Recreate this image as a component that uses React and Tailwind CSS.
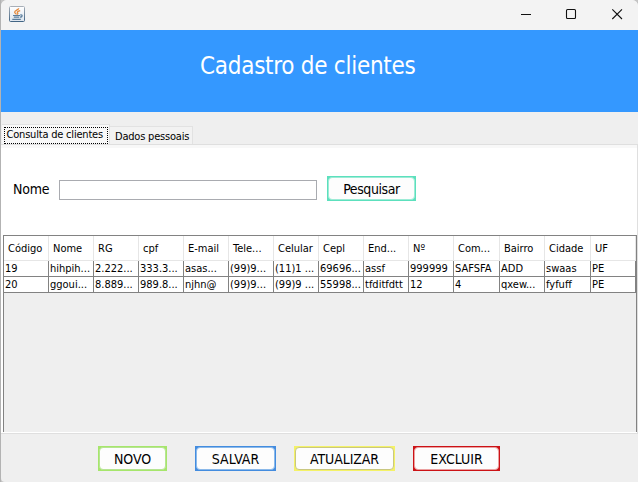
import React from "react";

const columns = [
  ["Código", "19", "20"],
  ["Nome", "hihpih...", "ggoui..."],
  ["RG", "2.222...", "8.889..."],
  ["cpf", "333.3...", "989.8..."],
  ["E-mail", "asas...", "njhn@"],
  ["Tele...", "(99)9...", "(99)9..."],
  ["Celular", "(11)1 ...", "(99)9 ..."],
  ["Cepl", "69696...", "55998..."],
  ["End...", "assf", "tfditfdtt"],
  ["Nº", "999999", "12"],
  ["Com...", "SAFSFA", "4"],
  ["Bairro", "ADD", "qxew..."],
  ["Cidade", "swaas", "fyfuff"],
  ["UF", "PE", "PE"],
];

const grid =
  "grid grid-cols-[45px_45px_45px_45px_45px_45px_45px_45px_45px_45px_46px_45px_46px_45px]";

function ActionButton({ children, frame, edge }) {
  return (
    <button className={`h-[25px] shrink-0 p-px ${frame}`}>
      <span
        className={`flex h-full w-full items-center justify-center rounded-[4px] border bg-[#fdfdfd] text-[14px] leading-[16px] whitespace-nowrap ${edge}`}
      >
        {children}
      </span>
    </button>
  );
}

function JavaIcon() {
  return (
    <svg width="16" height="16" viewBox="0 0 16 16" fill="none">
      <defs>
        <linearGradient id="tile" x1="0" y1="0" x2="0" y2="1">
          <stop offset="0" stopColor="#fff" />
          <stop offset="1" stopColor="#dde5ee" />
        </linearGradient>
        <linearGradient id="rim" x1="0" y1="0" x2="0" y2="1">
          <stop offset="0" stopColor="#a7afb8" />
          <stop offset="1" stopColor="#426584" />
        </linearGradient>
      </defs>
      <rect x=".5" y=".5" width="15" height="15" rx="1" fill="url(#tile)" stroke="url(#rim)" />
      <path d="M9.7 2.2C9.8 4 5.2 4.5 5.7 6.4C6 7.2 7 7.5 7.3 8.4M11.2 4.7C8.5 5.4 7.8 6.1 8.6 6.8C9.2 7.4 9 7.9 8.3 8.6" stroke="#e58a3c" strokeWidth="1.3" />
      <path d="M4 9.5H11M4.8 11.2H10.3M11.2 9C14 8.4 13.6 11.2 11 11.2M3.3 13.3H11.8" stroke="#5b7d9c" strokeWidth="1.2" />
    </svg>
  );
}

export default function App() {
  return (
    <div className="flex h-[482px] w-[639px] overflow-hidden bg-[#c4c4c4] font-['DejaVu_Sans_Condensed','DejaVu_Sans',sans-serif] text-black">
      <div className="w-px shrink-0 bg-[#b3b3b3]" />
      <div className="flex w-[637px] flex-col overflow-hidden rounded-t-[6px] rounded-bl-[4px] bg-[#efefef]">
        <header className="flex h-[30px] shrink-0 items-start justify-between bg-[#f3f3f3] pt-[6px] pr-[15px] pl-[8px]">
          <JavaIcon />
          <svg width="102" height="16" viewBox="0 0 102 16" fill="none" stroke="#111">
            <path d="M0 8.5H10" />
            <rect x="45.5" y="3.5" width="9" height="9" rx="1" strokeWidth="1.1" />
            <path d="M91.3 3.3L101 13M101 3.3L91.3 13" strokeWidth="1.1" />
          </svg>
        </header>
        <div className="flex h-[82px] shrink-0 bg-[#3498ff] pt-[20px] pl-[199px]">
          <h1 className="text-[24px] leading-[32px] tracking-[-0.28px] whitespace-nowrap text-white">Cadastro de clientes</h1>
        </div>
        <div className="flex h-[32px] shrink-0 items-end pl-px">
          <div className="flex h-[20px] w-[108px] justify-center border-t border-r border-[#e2e2e2] bg-[#f8f8f8] pt-[2px]">
            <span className="flex h-[17px] w-[104px] border border-dotted border-black pl-[2px] text-[11px] leading-[13px] tracking-[-0.2px] whitespace-nowrap">Consulta de clientes</span>
          </div>
          <div className="h-[18px] w-[83px] border-t border-r border-[#e2e2e2] bg-[#f2f2f2] pl-[5px] text-[11px] leading-[19px] tracking-[-0.2px] whitespace-nowrap">Dados pessoais</div>
        </div>
        <main className="flex h-[289px] shrink-0 flex-col border-t border-r border-[#dfdfdf] bg-white">
          <div className="h-[3px] shrink-0 bg-[#f8f8f8]" />
          <div className="flex h-[87px] shrink-0 items-start pt-[28px] pl-[12px]">
            <label className="w-[46px] pt-[4px] text-[14px] leading-[18px] tracking-[-0.2px]">Nome</label>
            <input className="mt-[4px] mr-[10px] h-[20px] w-[258px] border border-[#a9abb0] bg-white outline-none" />
            <ActionButton frame="w-[89px] bg-[#5ce0bd] tracking-[-0.4px]" edge="border-[#9debd6]">Pesquisar</ActionButton>
          </div>
          <div className="ml-[2px] flex h-[197px] w-[634px] shrink-0 flex-col border-x border-t border-[#828282] bg-[#efefef] text-[11px]">
            <div className={`${grid} h-[25px] shrink-0 bg-white`}>
              {columns.map(([name]) => (
                <div key={name} className="overflow-hidden border-r border-b border-[#e6e6e6] pl-[4px] leading-[26px] whitespace-nowrap">{name}</div>
              ))}
            </div>
            {[1, 2].map((row) => (
              <div key={row} className={`${grid} h-[16px] shrink-0 bg-white`}>
                {columns.map((cells) => (
                  <div key={cells[0]} className="overflow-hidden border-r border-b border-[#828282] pl-px leading-[15px] whitespace-nowrap">{cells[row]}</div>
                ))}
              </div>
            ))}
          </div>
        </main>
        <footer className="flex grow items-start border-t border-[#dfdfdf] pt-[12px] pl-[97px]">
          <ActionButton frame="w-[69px] mr-[28px] bg-[#a6e66b] tracking-[-0.1px]" edge="border-[#b6e492]">NOVO</ActionButton>
          <ActionButton frame="w-[81px] mr-[18px] bg-[#438cdf]" edge="border-[#8bb9ea]">SALVAR</ActionButton>
          <ActionButton frame="w-[101px] mr-[18px] bg-[#f4f267] tracking-[-0.1px]" edge="border-[#c9c780]">ATUALIZAR</ActionButton>
          <ActionButton frame="w-[87px] bg-[#cc1216]" edge="border-[#eba0a0]">EXCLUIR</ActionButton>
        </footer>
      </div>
      <div className="w-px shrink-0 bg-white" />
    </div>
  );
}
